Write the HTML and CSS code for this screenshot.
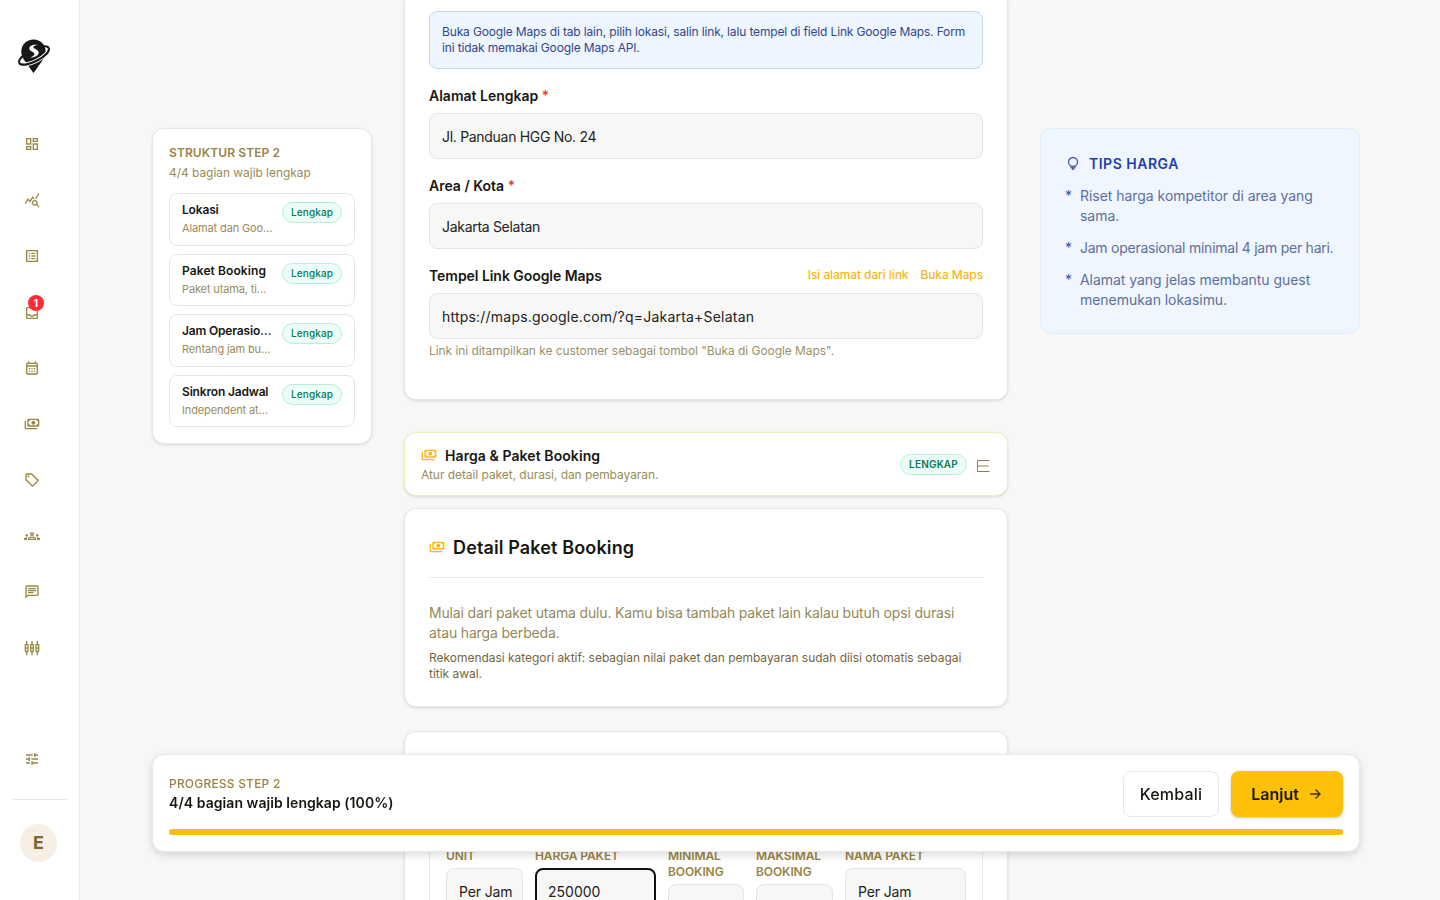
FILE: index.html
```html
<!DOCTYPE html>
<html lang="id">
<head>
    <meta charset="UTF-8">
    <meta name="viewport" content="width=device-width, initial-scale=1.0">
    <title>Step 2 - Harga &amp; Paket Booking</title>
    <link rel="stylesheet" href="styles.css">
</head>
<body>

    <svg class="sprite">
        <symbol id="payments" viewBox="0 -960 960 960">
            <path d="M560-440q-50 0-85-35t-35-85q0-50 35-85t85-35q50 0 85 35t35 85q0 50-35 85t-85 35ZM280-320q-33 0-56.5-23.5T200-400v-320q0-33 23.5-56.5T280-800h560q33 0 56.5 23.5T920-720v320q0 33-23.5 56.5T840-320H280Zm80-80h400q0-33 23.5-56.5T840-480v-160q-33 0-56.5-23.5T760-720H360q0 33-23.5 56.5T280-640v160q33 0 56.5 23.5T360-400Zm440 240H120q-33 0-56.5-23.5T40-240v-440h80v440h680v80Z"/>
        </symbol>
    </svg>

    <aside class="sidebar">
        <a class="logo" href="#">
            <svg width="36" height="36" viewBox="0 0 36 36">
                <ellipse cx="18" cy="17.500" rx="16.500" ry="6" transform="rotate(-27 18 17.5)" fill="none" stroke="#171717" stroke-width="2"/>
                <path d="M17.500 1.500C10.500 1.500 5.300 6.700 5.300 13.500c0 4 1.700 7.200 5 11.500 2.500 3.300 5 7.500 7.200 10 2.200-2.500 4.700-6.700 7.200-10 3.300-4.300 5-7.500 5-11.500 0-6.800-5.200-12-12.200-12z" fill="#171717"/>
                <path d="M22 7c-5-1-8.700.8-8.700 3.600 0 3.200 6 3.300 5 5.900-.4 1.200-2 2.200-3.800 3 5-.4 8.200-2.400 8.200-5.100 0-3.300-5.700-3.300-5.300-5.500.2-1 1.800-1.700 4.600-1.900z" fill="#fff"/>
                <path d="M3.300 25A16.500 6 -27 0 0 32.700 10" fill="none" stroke="#fff" stroke-width="4"/>
                <path d="M3.300 25A16.500 6 -27 0 0 32.700 10" fill="none" stroke="#171717" stroke-width="2.200"/>
            </svg>
        </a>

        <nav class="menu">
            <a href="#"><svg class="icon" viewBox="0 0 24 24"><path d="M19 5v2h-4V5h4M9 5v6H5V5h4m10 8v6h-4v-6h4M9 17v2H5v-2h4M21 3h-8v6h8V3zM11 3H3v10h8V3zm10 8h-8v10h8V11zm-10 4H3v6h8v-6z"/></svg></a>
            <a href="#"><svg class="icon" viewBox="0 0 24 24"><path d="M19.880 18.470c.44-.7.7-1.510.7-2.390 0-2.490-2.010-4.500-4.500-4.500s-4.500 2.010-4.500 4.500 2.010 4.500 4.490 4.500c.88 0 1.700-.26 2.390-.7L21.580 23 23 21.580l-3.120-3.110zm-3.800.11c-1.380 0-2.500-1.120-2.500-2.500s1.120-2.500 2.500-2.500 2.500 1.120 2.500 2.500-1.120 2.500-2.500 2.500zm-.36-8.500c-.74.02-1.450.18-2.100.45l-.55-.83-3.800 6.180-3.010-3.520-3.630 5.810L1 17l5-8 3 3.500L13 6l2.720 4.080zm2.590.5c-.64-.28-1.330-.45-2.050-.49L21.380 2 23 3.180l-4.690 7.400z"/></svg></a>
            <a href="#"><svg class="icon" viewBox="0 0 24 24"><path d="M19 5v14H5V5h14m1.100-2H3.900c-.5 0-.9.4-.9.9v16.200c0 .4.4.9.9.9h16.200c.4 0 .9-.5.9-.9V3.900c0-.5-.5-.9-.9-.9zM11 7h6v2h-6V7zm0 4h6v2h-6v-2zm0 4h6v2h-6zM7 7h2v2H7zm0 4h2v2H7zm0 4h2v2H7z"/></svg></a>
            <a class="inbox" href="#"><svg class="icon" viewBox="0 0 24 24"><path d="M19 3H5c-1.100 0-2 .9-2 2v14c0 1.100.9 2 2 2h14c1.100 0 2-.9 2-2V5c0-1.100-.9-2-2-2zm0 16H5v-3h3.560c.69 1.190 1.970 2 3.450 2s2.750-.81 3.450-2H19v3zm0-5h-4.990c0 1.100-.9 2-2 2s-2-.9-2-2H5V5h14v9z"/></svg><span class="count">1</span></a>
            <a href="#"><svg class="icon" viewBox="0 0 24 24"><path d="M19 4h-1V2h-2v2H8V2H6v2H5c-1.110 0-1.990.9-1.990 2L3 20c0 1.100.89 2 2 2h14c1.100 0 2-.9 2-2V6c0-1.100-.9-2-2-2zm0 16H5V10h14v10zm0-12H5V6h14v2zM9 14H7v-2h2v2zm4 0h-2v-2h2v2zm4 0h-2v-2h2v2zm-8 4H7v-2h2v2zm4 0h-2v-2h2v2zm4 0h-2v-2h2v2z"/></svg></a>
            <a href="#"><svg class="icon"><use href="#payments"/></svg></a>
            <a href="#"><svg class="icon" viewBox="0 -960 960 960"><path d="M856-390 570-104q-12 12-27 18t-30 6q-15 0-30-6t-27-18L103-457q-11-11-17-25.500T80-513v-287q0-33 23.500-56.500T160-880h287q16 0 31 6.500t26 17.500l352 353q12 12 17.500 27t5.500 30q0 15-5.500 29.500T856-390ZM513-160l286-286-353-354H160v286l353 354ZM260-640q25 0 42.500-17.500T320-700q0-25-17.500-42.500T260-760q-25 0-42.500 17.500T200-700q0 25 17.500 42.500T260-640Z"/></svg></a>
            <a href="#"><svg class="icon" viewBox="0 -960 960 960"><path d="M0-240v-63q0-43 44-70t116-27q13 0 25 .5t23 2.500q-14 21-21 44t-7 48v65H0Zm240 0v-65q0-32 17.500-58.500T307-410q32-20 76.500-30t96.500-10q53 0 97.500 10t76.500 30q32 20 49 46.500t17 58.500v65H240Zm540 0v-65q0-26-6.500-49T754-397q11-2 22.500-2.500t23.500-.5q72 0 116 26.500t44 70.500v63H780Zm-455-80h311q-10-20-55.500-35T480-370q-55 0-100.500 15T325-320ZM160-440q-33 0-56.500-23.500T80-520q0-34 23.500-57t56.500-23q34 0 57 23t23 57q0 33-23 56.500T160-440Zm640 0q-33 0-56.500-23.500T720-520q0-34 23.500-57t56.500-23q34 0 57 23t23 57q0 33-23 56.500T800-440Zm-320-40q-50 0-85-35t-35-85q0-51 35-85.500t85-34.500q51 0 85.500 34.500T600-600q0 50-34.500 85T480-480Zm0-80q17 0 28.500-11.500T520-600q0-17-11.500-28.500T480-640q-17 0-28.500 11.500T440-600q0 17 11.500 28.500T480-560Z"/></svg></a>
            <a href="#"><svg class="icon" viewBox="0 -960 960 960"><path d="M240-400h320v-80H240v80Zm0-120h480v-80H240v80Zm0-120h480v-80H240v80ZM80-80v-720q0-33 23.500-56.500T160-880h640q33 0 56.500 23.500T880-800v480q0 33-23.500 56.500T800-240H240L80-80Zm126-240h594v-480H160v525l46-45Z"/></svg></a>
            <a href="#"><svg class="icon" viewBox="0 0 24 24"><path fill-rule="evenodd" d="M5 2c0-.55-.45-1-1-1s-1 .45-1 1v4H1v10c0 1.300.84 2.400 2 2.820V23h2v-4.180C6.160 18.400 7 17.300 7 16V6H5V2zM3 8h2v3H3zm0 5h2v3H3zM13 2c0-.55-.45-1-1-1s-1 .45-1 1v4H9v10c0 1.300.84 2.400 2 2.820V23h2v-4.180c1.160-.42 2-1.520 2-2.820V6h-2V2zm-2 6h2v3h-2zm0 5h2v3h-2zM21 2c0-.55-.45-1-1-1s-1 .45-1 1v4h-2v10c0 1.300.84 2.400 2 2.820V23h2v-4.180c1.160-.42 2-1.520 2-2.820V6h-2V2zm-2 6h2v3h-2zm0 5h2v3h-2z"/></svg></a>
        </nav>

        <div class="sidebar-bottom">
            <a class="settings" href="#"><svg class="icon" viewBox="0 0 24 24"><path d="M3 17v2h6v-2H3zM3 5v2h10V5H3zm10 16v-2h8v-2h-8v-2h-2v6h2zM7 9v2H3v2h4v2h2V9H7zm14 4v-2H11v2h10zm-6-4h2V7h4V5h-4V3h-2v6z"/></svg></a>
            <div class="account"><span class="avatar">E</span></div>
        </div>
    </aside>

    <main class="layout">
        <section class="card structure">
            <h2>STRUKTUR STEP 2</h2>
            <p class="structure-info">4/4 bagian wajib lengkap</p>
            <div class="step">
                <div class="step-text"><h3>Lokasi</h3><p>Alamat dan Goo…</p></div>
                <span class="badge">Lengkap</span>
            </div>
            <div class="step">
                <div class="step-text"><h3 class="wide">Paket Booking</h3><p>Paket utama, ti…</p></div>
                <span class="badge">Lengkap</span>
            </div>
            <div class="step">
                <div class="step-text"><h3>Jam Operasio…</h3><p>Rentang jam bu…</p></div>
                <span class="badge">Lengkap</span>
            </div>
            <div class="step">
                <div class="step-text"><h3>Sinkron Jadwal</h3><p>Independent at…</p></div>
                <span class="badge">Lengkap</span>
            </div>
        </section>

        <div class="form-column">
            <section class="card location">
                <p class="notice">Buka Google Maps di tab lain, pilih lokasi, salin link, lalu tempel di field Link Google Maps. Form<br>ini tidak memakai Google Maps API.</p>
                <div class="field">
                    <label for="address">Alamat Lengkap <b>*</b></label>
                    <input id="address" type="text" value="Jl. Panduan HGG No. 24">
                </div>
                <div class="field">
                    <label for="area">Area / Kota <b>*</b></label>
                    <input id="area" type="text" value="Jakarta Selatan">
                </div>
                <div class="field">
                    <div class="label-row">
                        <label for="maps">Tempel Link Google Maps</label>
                        <span class="links"><a href="#">Isi alamat dari link</a><a href="#">Buka Maps</a></span>
                    </div>
                    <input id="maps" class="url" type="text" value="https://maps.google.com/?q=Jakarta+Selatan">
                    <p class="hint">Link ini ditampilkan ke customer sebagai tombol "Buka di Google Maps".</p>
                </div>
            </section>

            <section class="card accordion">
                <div>
                    <h2><svg class="icon gold"><use href="#payments"/></svg>Harga &amp; Paket Booking</h2>
                    <p>Atur detail paket, durasi, dan pembayaran.</p>
                </div>
                <div class="accordion-side">
                    <span class="badge upper">LENGKAP</span>
                    <svg class="toggle" width="14" height="14" viewBox="0 0 14 14"><path d="M13.500 1.500H1.500v11h12M1.500 7h11"/></svg>
                </div>
            </section>

            <section class="card detail">
                <h2><svg class="icon gold"><use href="#payments"/></svg>Detail Paket Booking</h2>
                <p class="lead">Mulai dari paket utama dulu. Kamu bisa tambah paket lain kalau butuh opsi durasi<br>atau harga berbeda.</p>
                <p class="note">Rekomendasi kategori aktif: sebagian nilai paket dan pembayaran sudah diisi otomatis sebagai<br>titik awal.</p>
            </section>

            <section class="card packages">
                <div class="package">
                    <div class="col"><label>UNIT</label><input type="text" value="Per Jam"></div>
                    <div class="col"><label>HARGA PAKET</label><input class="focused" type="text" value="250000"></div>
                    <div class="col"><label>MINIMAL BOOKING</label><input type="text"></div>
                    <div class="col"><label>MAKSIMAL BOOKING</label><input type="text"></div>
                    <div class="col"><label>NAMA PAKET</label><input type="text" value="Per Jam"></div>
                </div>
            </section>
        </div>

        <section class="tips">
            <h2>
                <svg width="16" height="16" viewBox="0 0 16 16"><circle cx="8" cy="6" r="4.500" fill="none" stroke="#4555b5" stroke-width="1.300"/><path d="M5.500 10.500h5v1.800H9.600L8.800 14H7.200l-.8-1.700h-.9z" fill="#5a6b9c"/></svg>
                TIPS HARGA
            </h2>
            <ul>
                <li>Riset harga kompetitor di area yang<br>sama.</li>
                <li class="tight">Jam operasional minimal 4 jam per hari.</li>
                <li>Alamat yang jelas membantu guest<br>menemukan lokasimu.</li>
            </ul>
        </section>
    </main>

    <footer class="progress">
        <div class="progress-row">
            <div>
                <p class="progress-title">PROGRESS STEP 2</p>
                <p class="progress-text">4/4 bagian wajib lengkap (100%)</p>
            </div>
            <div class="actions">
                <button class="back">Kembali</button>
                <button class="next">Lanjut
                    <svg width="16" height="16" viewBox="0 0 16 16"><path d="M3 8h10M8.500 3.500L13 8l-4.500 4.500"/></svg>
                </button>
            </div>
        </div>
        <div class="bar"><div class="bar-fill" style="width: 100%"></div></div>
    </footer>

</body>
</html>
```
FILE: styles.css
```css
* {
    box-sizing: border-box;
}

body {
    margin: 0;
    height: 900px;
    overflow: hidden;
    display: flex;
    background: #f7f7f5;
    color: #171712;
    font-family: Inter, "Liberation Sans", sans-serif;
    font-size: 14px;
    line-height: 20px;
}

h2, h3, p, ul {
    margin: 0;
    padding: 0;
}

a {
    text-decoration: none;
}

.sprite {
    display: none;
}

.icon {
    display: block;
    width: 16px;
    height: 16px;
    fill: #9a8845;
    flex-shrink: 0;
}

.gold {
    fill: #fbb913;
}

/* Sidebar */
.sidebar {
    width: 80px;
    height: 900px;
    padding: 38px 11px 0 12px;
    background: #fff;
    border-right: 1px solid #ebebea;
    display: flex;
    flex-direction: column;
    flex-shrink: 0;
}

.logo {
    height: 36px;
    padding-left: 4px;
    margin-bottom: 62px;
}

.menu {
    display: flex;
    flex-direction: column;
    gap: 40px;
    padding-left: 12px;
}

.menu a {
    height: 16px;
    position: relative;
}

.menu .inbox {
    padding-top: 1px;
}

.count {
    position: absolute;
    left: 4px;
    top: -9px;
    width: 16px;
    height: 16px;
    border-radius: 50%;
    background: #fb2c36;
    color: #fff;
    font-size: 10px;
    font-weight: 700;
    line-height: 16px;
    text-align: center;
}

.sidebar-bottom {
    margin-top: 95px;
}

.settings {
    display: block;
    padding-left: 12px;
    padding-bottom: 32px;
}

.account {
    border-top: 1px solid #e8e8e6;
    padding: 24px 0 0 8px;
}

.avatar {
    display: block;
    width: 37px;
    height: 38px;
    border-radius: 50%;
    background: #f7efe5;
    color: #7b6831;
    font-size: 18px;
    font-weight: 700;
    line-height: 38px;
    text-align: center;
}

/* Content */
.layout {
    display: grid;
    grid-template-columns: 220px 604px 320px;
    gap: 32px;
    align-items: start;
    height: 900px;
    overflow: hidden;
    padding-left: 72px;
}

.card {
    background: #fff;
    border: 1px solid #e8e8e6;
    border-radius: 12px;
    box-shadow: 0 1px 3px rgba(0, 0, 0, 0.12);
}

.structure {
    margin-top: 128px;
    padding: 16px;
}

.structure h2 {
    font-size: 12px;
    line-height: 16px;
    font-weight: 600;
    letter-spacing: 0.1px;
    color: #978444;
}

.structure-info {
    font-size: 12px;
    line-height: 16px;
    margin: 4px 0 12px;
    letter-spacing: -0.05px;
    color: #9a8c58;
}

.step {
    display: flex;
    justify-content: space-between;
    height: 52.500px;
    padding: 8px 12px;
    margin-bottom: 8px;
    border: 1px solid #e5e5e4;
    border-radius: 8px;
}

.step:last-child {
    margin-bottom: 0;
}

.step-text {
    white-space: nowrap;
}

.step h3 {
    font-size: 12px;
    line-height: 16px;
    font-weight: 600;
    letter-spacing: -0.17px;
}

.step h3.wide {
    letter-spacing: 0.1px;
}

.step p {
    font-size: 11px;
    line-height: 17px;
    margin-top: 2px;
    letter-spacing: -0.13px;
    color: #9a8c58;
}

.badge {
    height: 21px;
    padding: 0 8px;
    border: 1px solid #b5f0d7;
    border-radius: 11px;
    background: #ecfdf5;
    color: #087a59;
    font-size: 10px;
    line-height: 19px;
    font-weight: 500;
    letter-spacing: 0.1px;
    white-space: nowrap;
}

.form-column {
    min-width: 0;
}

.location {
    height: 400px;
    padding: 11px 24px 0;
    border-top: 0;
    border-radius: 0 0 12px 12px;
}

.notice {
    height: 58px;
    padding: 12px;
    border: 1px solid #c3daf5;
    border-radius: 8px;
    background: #edf5ff;
    color: #34468a;
    font-size: 12px;
    line-height: 16px;
    letter-spacing: -0.15px;
    white-space: nowrap;
}

.field {
    margin-top: 17px;
}

label {
    display: block;
    font-size: 14px;
    line-height: 20px;
    font-weight: 600;
    margin-bottom: 7px;
}

label b {
    color: #fb2c36;
    font-weight: 500;
}

input {
    display: block;
    width: 100%;
    height: 46px;
    padding: 0 0 0 12px;
    border: 1px solid #e5e5e3;
    border-radius: 8px;
    background: #f7f7f5;
    color: #22221e;
    font: inherit;
    letter-spacing: -0.3px;
}

.url {
    letter-spacing: 0.21px;
}

.label-row {
    display: flex;
    justify-content: space-between;
    letter-spacing: -0.05px;
}

.links {
    display: flex;
    gap: 12px;
    font-size: 12px;
    line-height: 17px;
    font-weight: 500;
    letter-spacing: -0.1px;
}

.links a {
    color: #f5b71b;
}

.hint {
    font-size: 12px;
    line-height: 16px;
    margin-top: 4px;
    letter-spacing: -0.06px;
    color: #9a9069;
    white-space: nowrap;
}

.accordion {
    height: 64px;
    margin-top: 32px;
    padding: 13px 16px;
    display: flex;
    justify-content: space-between;
    border-color: #eff0b5;
}

.accordion h2 {
    display: flex;
    gap: 8px;
    font-size: 14px;
    line-height: 20px;
    font-weight: 600;
    letter-spacing: 0.08px;
}

.accordion h2 .icon {
    margin-top: 1px;
}

.accordion p {
    font-size: 12px;
    line-height: 16px;
    margin-top: 1px;
    letter-spacing: -0.06px;
    color: #9a8c58;
}

.accordion-side {
    display: flex;
    gap: 9px;
    padding: 8px 1px 0 0;
}

.upper {
    font-weight: 600;
    letter-spacing: 0.2px;
}

.toggle {
    margin-top: 5px;
    fill: none;
    stroke: #8f7f48;
}

.detail {
    height: 199px;
    margin-top: 12px;
    padding: 24px 23px 0 24px;
}

.detail h2 {
    display: flex;
    gap: 8px;
    height: 45px;
    padding-top: 1px;
    border-bottom: 1px solid #e8e8e6;
    font-size: 18px;
    line-height: 28px;
    font-weight: 600;
    letter-spacing: 0.13px;
}

.detail h2 .icon {
    margin-top: 5px;
}

.lead {
    margin-top: 25px;
    letter-spacing: -0.16px;
    color: #94885a;
    white-space: nowrap;
}

.note {
    margin-top: 7px;
    font-size: 12px;
    line-height: 16px;
    letter-spacing: -0.03px;
    color: #75663d;
    white-space: nowrap;
}

.packages {
    height: 300px;
    margin-top: 24px;
    padding: 88px 24px 0;
}

.package {
    display: grid;
    grid-template-columns: 77px 121px 76px 77px 121px;
    gap: 12px;
    padding: 27px 16px 0;
    border: 1px solid #e8e8e6;
    border-radius: 12px;
}

.col label {
    font-size: 12px;
    line-height: 16px;
    margin-bottom: 4px;
    letter-spacing: -0.1px;
    color: #978444;
}

.col input {
    letter-spacing: -0.15px;
}

.col .focused {
    border: 2px solid #111;
    padding-left: 11px;
    letter-spacing: 0;
}

.tips {
    margin-top: 128px;
    height: 206px;
    padding: 25px 24px 0;
    border: 1px solid #e0ecfb;
    border-radius: 12px;
    background: #eff6ff;
}

.tips h2 {
    display: flex;
    align-items: center;
    gap: 8px;
    color: #1d3fae;
    font-size: 14px;
    line-height: 20px;
    font-weight: 600;
    letter-spacing: 0.5px;
}

.tips ul {
    margin-top: 12px;
    list-style: none;
    letter-spacing: -0.04px;
    color: #5e6f9b;
    white-space: nowrap;
}

.tips li {
    display: flex;
    margin-bottom: 12px;
}

.tips li::before {
    content: "*";
    width: 15px;
    color: #3454a5;
    flex-shrink: 0;
}

.tips .tight {
    letter-spacing: -0.25px;
}

/* Bottom bar stays above the form */
.progress {
    position: fixed;
    left: 152px;
    top: 754px;
    width: 1208px;
    height: 98px;
    padding: 16px;
    background: #fff;
    border: 1px solid #e8e8e6;
    border-radius: 12px;
    box-shadow: 0 3px 8px rgba(0, 0, 0, 0.14);
}

.progress-row {
    display: flex;
    justify-content: space-between;
}

.progress-title {
    margin-top: 5px;
    font-size: 12px;
    line-height: 16px;
    font-weight: 500;
    letter-spacing: 0.2px;
    color: #978444;
}

.progress-text {
    margin-top: 1px;
    font-weight: 600;
    letter-spacing: 0.06px;
}

.actions {
    display: flex;
    gap: 12px;
}

button {
    height: 46px;
    border: 1px solid #e8e8e6;
    border-radius: 8px;
    background: #fff;
    color: #171712;
    font-family: inherit;
    font-size: 16px;
    font-weight: 500;
}

.back {
    width: 96px;
    padding: 0;
    letter-spacing: 0.2px;
}

.next {
    display: flex;
    align-items: center;
    justify-content: center;
    gap: 8px;
    width: 112px;
    padding: 0;
    border: 0;
    background: #ffc107;
    font-weight: 600;
    box-shadow: 0 1px 3px rgba(0, 0, 0, 0.25);
}

.next svg {
    fill: none;
    stroke: #3d2f0a;
    stroke-width: 1.300;
}

.bar {
    height: 6px;
    margin-top: 12px;
    border-radius: 3px;
    background: #eee;
}

.bar-fill {
    height: 6px;
    border-radius: 3px;
    background: #fbbc14;
}
```
